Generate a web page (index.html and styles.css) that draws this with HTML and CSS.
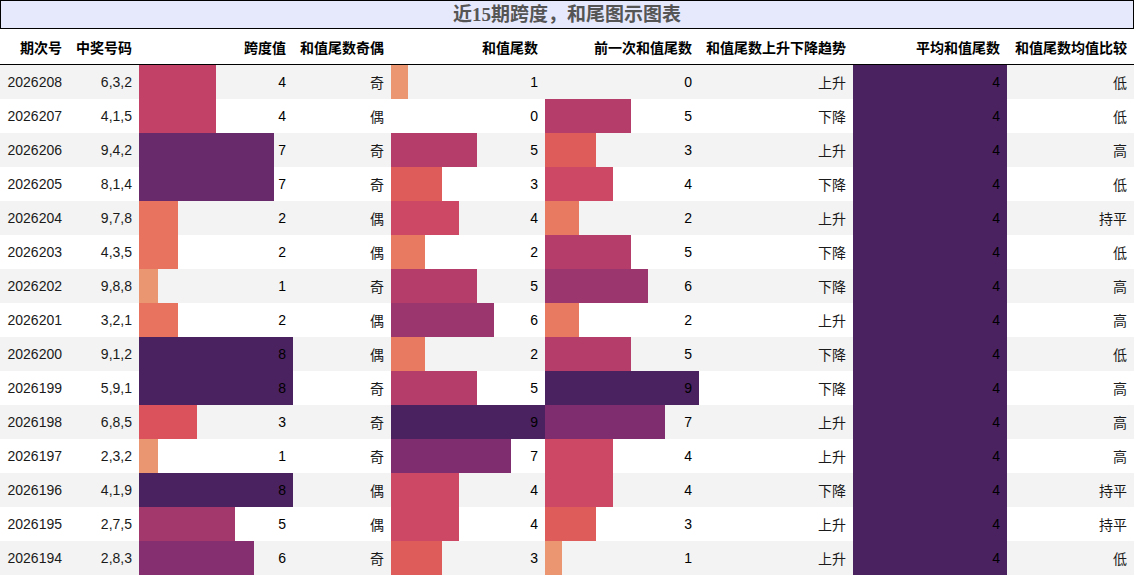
FILE: index.html
```html
<!DOCTYPE html>
<html lang="zh">
<head>
<meta charset="utf-8">
<title>近15期跨度，和尾图示图表</title>
<link rel="stylesheet" href="styles.css">
</head>
<body>
<div class="title">近15期跨度，和尾图示图表</div>
<table class="grid">
<colgroup>
<col class="c-issue"><col class="c-num"><col class="c-bar"><col class="c-parity"><col class="c-bar"><col class="c-bar"><col class="c-bar"><col class="c-bar"><col class="c-cmp">
</colgroup>
<thead>
<tr><th>期次号</th><th>中奖号码</th><th>跨度值</th><th>和值尾数奇偶</th><th>和值尾数</th><th>前一次和值尾数</th><th>和值尾数上升下降趋势</th><th>平均和值尾数</th><th>和值尾数均值比较</th></tr>
</thead>
<tbody>
<tr><td>2026208</td><td>6,3,2</td><td class="bar" style="--w:50%;--c:#c14167">4</td><td>奇</td><td class="bar" style="--w:11.11%;--c:#eb9671">1</td><td class="bar" style="--w:0%;--c:transparent">0</td><td>上升</td><td class="bar" style="--w:100%;--c:#4b2260">4</td><td>低</td></tr>
<tr><td>2026207</td><td>4,1,5</td><td class="bar" style="--w:50%;--c:#c14167">4</td><td>偶</td><td class="bar" style="--w:0%;--c:transparent">0</td><td class="bar" style="--w:55.56%;--c:#b53d69">5</td><td>下降</td><td class="bar" style="--w:100%;--c:#4b2260">4</td><td>低</td></tr>
<tr><td>2026206</td><td>9,4,2</td><td class="bar" style="--w:87.5%;--c:#682a6a">7</td><td>奇</td><td class="bar" style="--w:55.56%;--c:#b53d69">5</td><td class="bar" style="--w:33.33%;--c:#de5c5a">3</td><td>上升</td><td class="bar" style="--w:100%;--c:#4b2260">4</td><td>高</td></tr>
<tr><td>2026205</td><td>8,1,4</td><td class="bar" style="--w:87.5%;--c:#682a6a">7</td><td>奇</td><td class="bar" style="--w:33.33%;--c:#de5c5a">3</td><td class="bar" style="--w:44.44%;--c:#cd4865">4</td><td>下降</td><td class="bar" style="--w:100%;--c:#4b2260">4</td><td>低</td></tr>
<tr><td>2026204</td><td>9,7,8</td><td class="bar" style="--w:25%;--c:#e8735f">2</td><td>偶</td><td class="bar" style="--w:44.44%;--c:#cd4865">4</td><td class="bar" style="--w:22.22%;--c:#e87a61">2</td><td>上升</td><td class="bar" style="--w:100%;--c:#4b2260">4</td><td>持平</td></tr>
<tr><td>2026203</td><td>4,3,5</td><td class="bar" style="--w:25%;--c:#e8735f">2</td><td>偶</td><td class="bar" style="--w:22.22%;--c:#e87a61">2</td><td class="bar" style="--w:55.56%;--c:#b53d69">5</td><td>下降</td><td class="bar" style="--w:100%;--c:#4b2260">4</td><td>低</td></tr>
<tr><td>2026202</td><td>9,8,8</td><td class="bar" style="--w:12.5%;--c:#ea9670">1</td><td>奇</td><td class="bar" style="--w:55.56%;--c:#b53d69">5</td><td class="bar" style="--w:66.67%;--c:#9b366f">6</td><td>下降</td><td class="bar" style="--w:100%;--c:#4b2260">4</td><td>高</td></tr>
<tr><td>2026201</td><td>3,2,1</td><td class="bar" style="--w:25%;--c:#e8735f">2</td><td>偶</td><td class="bar" style="--w:66.67%;--c:#9b366f">6</td><td class="bar" style="--w:22.22%;--c:#e87a61">2</td><td>上升</td><td class="bar" style="--w:100%;--c:#4b2260">4</td><td>高</td></tr>
<tr><td>2026200</td><td>9,1,2</td><td class="bar" style="--w:100%;--c:#4b2260">8</td><td>偶</td><td class="bar" style="--w:22.22%;--c:#e87a61">2</td><td class="bar" style="--w:55.56%;--c:#b53d69">5</td><td>下降</td><td class="bar" style="--w:100%;--c:#4b2260">4</td><td>低</td></tr>
<tr><td>2026199</td><td>5,9,1</td><td class="bar" style="--w:100%;--c:#4b2260">8</td><td>奇</td><td class="bar" style="--w:55.56%;--c:#b53d69">5</td><td class="bar" style="--w:100%;--c:#4b2260">9</td><td>下降</td><td class="bar" style="--w:100%;--c:#4b2260">4</td><td>高</td></tr>
<tr><td>2026198</td><td>6,8,5</td><td class="bar" style="--w:37.5%;--c:#db525c">3</td><td>奇</td><td class="bar" style="--w:100%;--c:#4b2260">9</td><td class="bar" style="--w:77.78%;--c:#802d6f">7</td><td>上升</td><td class="bar" style="--w:100%;--c:#4b2260">4</td><td>高</td></tr>
<tr><td>2026197</td><td>2,3,2</td><td class="bar" style="--w:12.5%;--c:#ea9670">1</td><td>奇</td><td class="bar" style="--w:77.78%;--c:#802d6f">7</td><td class="bar" style="--w:44.44%;--c:#cd4865">4</td><td>上升</td><td class="bar" style="--w:100%;--c:#4b2260">4</td><td>高</td></tr>
<tr><td>2026196</td><td>4,1,9</td><td class="bar" style="--w:100%;--c:#4b2260">8</td><td>偶</td><td class="bar" style="--w:44.44%;--c:#cd4865">4</td><td class="bar" style="--w:44.44%;--c:#cd4865">4</td><td>下降</td><td class="bar" style="--w:100%;--c:#4b2260">4</td><td>持平</td></tr>
<tr><td>2026195</td><td>2,7,5</td><td class="bar" style="--w:62.5%;--c:#a3386c">5</td><td>偶</td><td class="bar" style="--w:44.44%;--c:#cd4865">4</td><td class="bar" style="--w:33.33%;--c:#de5c5a">3</td><td>上升</td><td class="bar" style="--w:100%;--c:#4b2260">4</td><td>持平</td></tr>
<tr><td>2026194</td><td>2,8,3</td><td class="bar" style="--w:75%;--c:#862f70">6</td><td>奇</td><td class="bar" style="--w:33.33%;--c:#de5c5a">3</td><td class="bar" style="--w:11.11%;--c:#eb9671">1</td><td>上升</td><td class="bar" style="--w:100%;--c:#4b2260">4</td><td>低</td></tr>
</tbody>
</table>
</body>
</html>
```
FILE: styles.css
```css
html, body {
  margin: 0;
  padding: 0;
  background: #fff;
}
body {
  width: 1134px;
  font-family: "Liberation Sans", "Noto Sans CJK SC", sans-serif;
  font-size: 14px;
  color: #1a1a1a;
}
.title {
  box-sizing: border-box;
  height: 29px;
  border: 1px solid #000;
  background: #e6e8fb;
  color: #555;
  font-family: "Liberation Serif", "Noto Sans CJK SC", serif;
  font-weight: bold;
  font-size: 19px;
  line-height: 27px;
  text-align: center;
}
.grid {
  width: 1134px;
  table-layout: fixed;
  border-collapse: collapse;
  border-spacing: 0;
}
.c-issue { width: 70px; }
.c-num { width: 69px; }
.c-bar { width: 154px; }
.c-parity { width: 98px; }
.c-cmp { width: 127px; }
.grid th {
  height: 35px;
  padding: 0 7px 0 0;
  text-align: right;
  font-weight: bold;
  font-size: 14px;
  color: #000;
  border-bottom: 1px solid #000;
  white-space: nowrap;
  overflow: hidden;
}
.grid td {
  height: 34px;
  padding: 0 7px 0 0;
  text-align: right;
  white-space: nowrap;
}
.grid td:first-child, .grid th:first-child {
  padding-right: 8px;
}
.grid tbody tr:nth-child(odd) {
  background: #f3f3f3;
}
.grid tbody tr:nth-child(even) {
  background: #fff;
}
.grid td.bar {
  color: #000;
  background-image: linear-gradient(90deg, var(--c) var(--w), transparent var(--w));
  background-repeat: no-repeat;
}
```
